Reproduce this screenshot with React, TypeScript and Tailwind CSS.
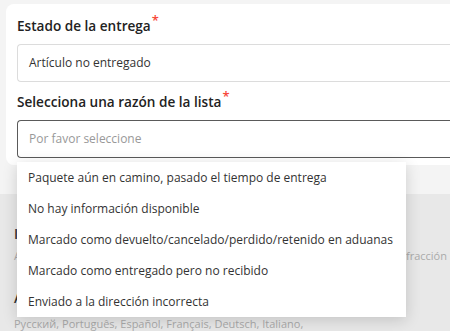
export default function App() {
  const reasons = [
    "Paquete aún en camino, pasado el tiempo de entrega",
    "No hay información disponible",
    "Marcado como devuelto/cancelado/perdido/retenido en aduanas",
    "Marcado como entregado pero no recibido",
    "Enviado a la dirección incorrecta",
  ];

  return (
    <div className="h-[331px] w-[450px] overflow-hidden bg-[#f4f4f4] font-['Open_Sans',sans-serif] text-[#333]">
      {/* Form card */}
      <div className="pl-[6px] pt-[4px]">
        <div className="rounded-l-lg bg-white pb-[7px] pl-[11px] pt-[11px]">
          <label className="block text-[13.6px] font-semibold leading-[22px] text-[#222]">
            Estado de la entrega
            <sup className="ml-[1px] text-[13px] font-semibold text-[#f7483a]">*</sup>
          </label>
          <div className="mt-[7px] flex h-[38px] items-center rounded-l-[4px] border border-r-0 border-[#dcdcdc] pl-[11px] text-[12px] text-[#333]">
            Artículo no entregado
          </div>

          <label className="mt-[9px] block text-[13.6px] font-semibold leading-[22px] text-[#222]">
            Selecciona una razón de la lista
            <sup className="ml-[1px] text-[13px] font-semibold text-[#f7483a]">*</sup>
          </label>
          <div className="relative mt-[7px]">
            <div className="flex h-[38px] items-center rounded-l-[4px] border border-r-0 border-[#5a5a5a] pl-[11px] text-[12px] text-[#999]">
              Por favor seleccione
            </div>

            {/* Dropdown list */}
            <ul className="absolute left-0 top-[42px] z-10 w-[389px] bg-white shadow-[0_3px_14px_rgba(0,0,0,0.16)]">
              {reasons.map((r) => (
                <li
                  key={r}
                  className="flex h-[31px] items-center whitespace-nowrap pl-[11px] text-[12px] text-[#333]"
                >
                  {r}
                </li>
              ))}
            </ul>
          </div>
        </div>
      </div>

      {/* Section behind the dropdown */}
      <div className="mt-[29px] h-[200px] bg-[#e8e8e8] pl-[14px] pr-[3px] pt-[29px]">
        <div className="text-[13.6px] font-semibold leading-[22px] text-[#333]">
          Idioma
        </div>
        <div className="mt-[1px] flex whitespace-nowrap text-[11px] leading-[20px] text-[#aaa]">
          <span>Ayuda</span>
          <span className="ml-auto">fracción</span>
        </div>
        <div className="mt-[21px] text-[13.6px] font-semibold leading-[22px] text-[#333]">
          Atención
        </div>
        <div className="mt-[5px] whitespace-nowrap text-[11px] leading-[20px] text-[#aaa]">
          Русский, Português, Español, Français, Deutsch, Italiano,
        </div>
      </div>
    </div>
  );
}
